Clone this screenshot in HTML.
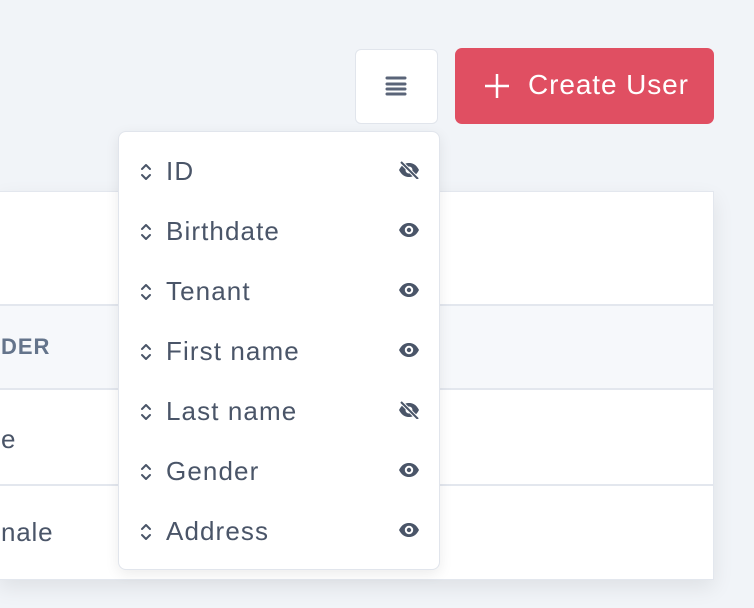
<!DOCTYPE html>
<html><head><style>
body{margin:0;width:754px;height:608px;background:#f1f4f8;font-family:"Liberation Sans",sans-serif;position:relative;overflow:hidden}
.table{position:absolute;left:-2px;top:191px;width:714px;height:387px;background:#fff;border:1px solid #e3e7ee;box-shadow:0 8px 20px rgba(0,0,0,.08)}
.hdr{position:absolute;left:0;top:112px;width:714px;height:82px;background:#f6f8fb;border-top:2px solid #e3e7ee;border-bottom:2px solid #e3e7ee}
.line{position:absolute;left:0;width:714px;border-top:2px solid #e3e7ee}
.t{position:absolute;color:#4a5568;font-size:26px;letter-spacing:.8px}
.menubtn{position:absolute;left:355px;top:49px;width:81px;height:73px;background:#fff;border:1px solid #e1e5ec;border-radius:6px}
.create{position:absolute;left:455px;top:48px;width:259px;height:76px;background:#e04f62;border-radius:7px;color:#fff;font-size:28px;letter-spacing:.9px}
.dd{position:absolute;left:118px;top:131px;width:320px;height:437px;background:#fff;border:1px solid #e1e5ec;border-radius:8px;box-shadow:0 4px 14px rgba(0,0,0,.08)}
.row{position:absolute;left:0;width:320px;height:60px}
.row span{position:absolute;left:47px;top:15px;font-size:26px;letter-spacing:1.1px;color:#4a5568}
.row svg.a{position:absolute;left:20px;top:21px}
.row svg.e{position:absolute;left:279px;top:20px}
</style></head><body>
<div class="table">
<div class="hdr"><div class="t" style="left:2px;top:28px;font-weight:bold;font-size:22px;color:#64748b;letter-spacing:1px">DER</div></div>
<div class="line" style="top:292px"></div>
<div class="t" style="left:2px;top:232px">e</div>
<div class="t" style="left:2px;top:325px">nale</div>
</div>
<div class="menubtn"><svg style="position:absolute;left:29px;top:24px" width="22" height="24" viewBox="0 0 22 24"><g stroke="#5a6478" stroke-width="3" stroke-linecap="round"><line x1="2" y1="4" x2="20" y2="4"/><line x1="2" y1="10" x2="20" y2="10"/><line x1="2" y1="15" x2="20" y2="15"/><line x1="2" y1="20" x2="20" y2="20"/></g></svg></div>
<div class="create"><svg style="position:absolute;left:30px;top:26px" width="24" height="24"><g stroke="#fff" stroke-width="2.5"><line x1="12" y1="0" x2="12" y2="24"/><line x1="0" y1="12" x2="24" y2="12"/></g></svg><span style="position:absolute;left:73px;top:21px">Create User</span></div>
<div class="dd" id="dd"></div>
<script>
var items=[["ID",0],["Birthdate",1],["Tenant",1],["First name",1],["Last name",0],["Gender",1],["Address",1]];
var h="";
items.forEach(function(it,i){
var eye=it[1]?'<path d="M1 9C4 3 8 2 11 2s7 1 10 7c-3 6-7 7-10 7S4 15 1 9z" fill="#4a5568"/><circle cx="11" cy="9" r="4.2" fill="#fff"/><circle cx="11" cy="9" r="2.2" fill="#4a5568"/>':
'<path d="M1 9C4 3 8 2 11 2s7 1 10 7c-3 6-7 7-10 7S4 15 1 9z" fill="#4a5568"/><circle cx="11" cy="9" r="3.5" fill="#fff"/><line x1="3" y1="1" x2="20" y2="18" stroke="#fff" stroke-width="4"/><line x1="3" y1="1" x2="20" y2="18" stroke="#4a5568" stroke-width="2"/>';
h+='<div class="row" style="top:'+(9+i*60)+'px"><svg class="a" width="14" height="20" viewBox="0 0 14 20"><path d="M3 7l4-4 4 4M3 13l4 4 4-4" fill="none" stroke="#4a5568" stroke-width="2" stroke-linecap="round" stroke-linejoin="round"/></svg><span>'+it[0]+'</span><svg class="e" width="22" height="18" viewBox="0 0 22 18">'+eye+'</svg></div>';
});
document.getElementById("dd").innerHTML=h;
</script>
</body></html>
